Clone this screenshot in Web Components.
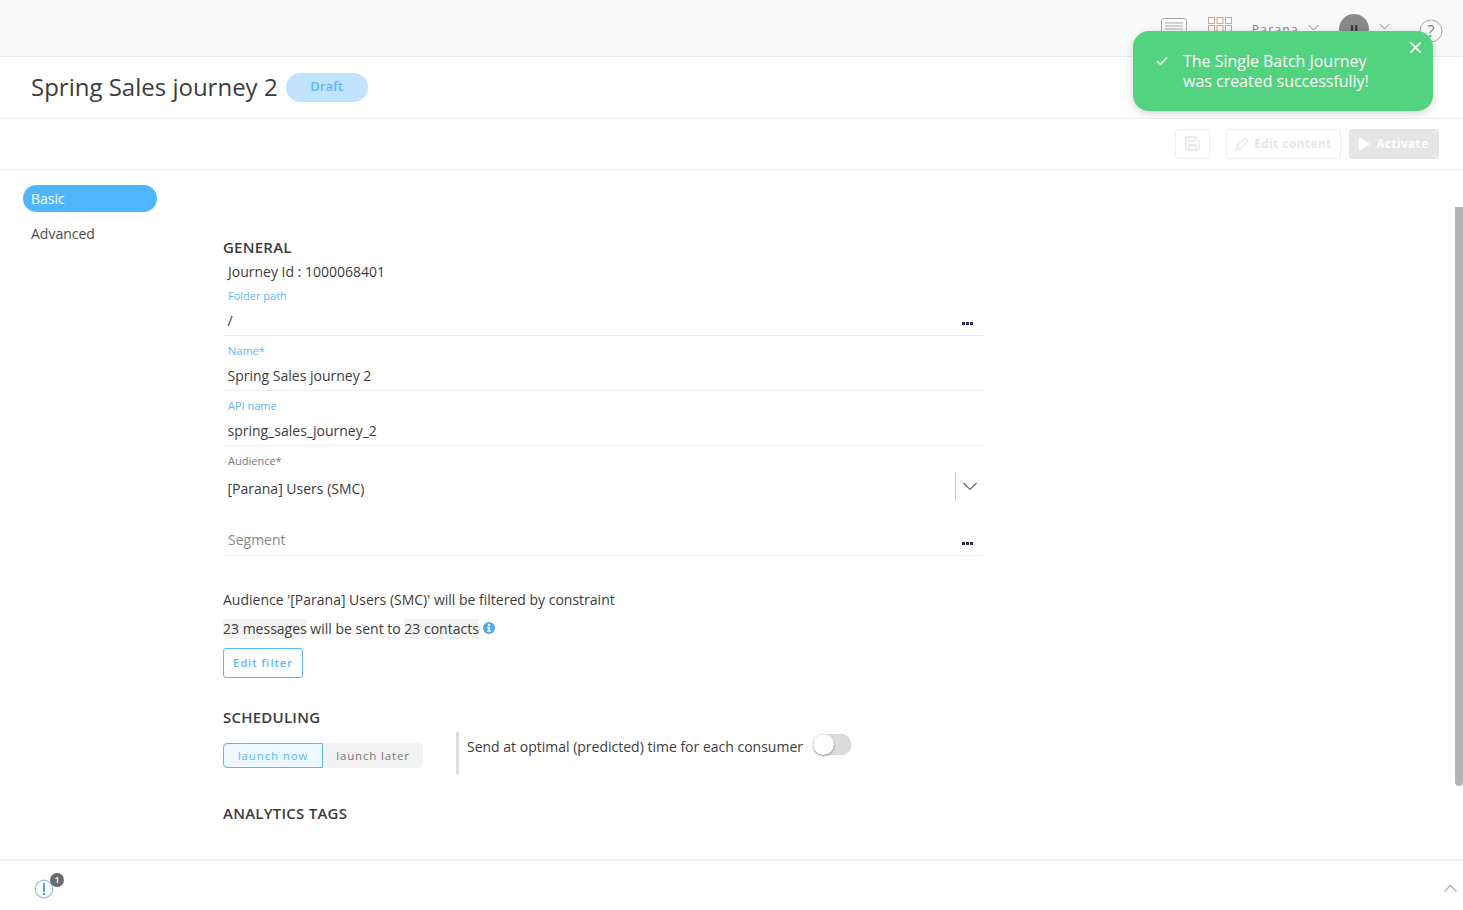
<!DOCTYPE html>
<html><head><meta charset="utf-8"><style>
html,body{margin:0;height:910px;overflow:hidden;background:#fff;font-family:"Open Sans","Liberation Sans",sans-serif;color:#3c3c3c}
</style></head><body>
<app-page></app-page>
<script>
const css=(s)=>`<style>${s}</style>`;
class Base extends HTMLElement{
  constructor(){super();this.attachShadow({mode:'open'}).innerHTML=this.markup();}
}
class TopBar extends Base{markup(){return css(`
:host{display:flex;height:56px;box-sizing:content-box;background:#fafafa;border-bottom:1px solid #eee;align-items:flex-start;justify-content:flex-end;color:#888;overflow:hidden}
.row{display:flex;align-items:center;height:42px;margin-top:8px;padding-right:20px}
svg{display:block}
.name{font-size:12px;letter-spacing:1.3px;margin:0 0 0 20px;color:#888}
.av{width:30px;height:30px;border-radius:50%;background:#8a8a8a;color:#333;font-size:13px;font-weight:700;display:flex;align-items:center;justify-content:center;margin:0 10px 0 20px}
`)+`<div class="row">
<svg style="margin-top:-3px" width="26" height="20" viewBox="0 0 26 20" fill="none" stroke="#aaa"><rect x=".5" y=".5" width="25" height="19" rx="2"/><path d="M4 5h18M4 8h18M4 11h18M4 14h18"/></svg>
<svg style="margin:-5px 0 0 21px" width="24" height="20" viewBox="0 0 24 20" fill="none" stroke="#c4a994"><rect x=".5" y=".5" width="6" height="6"/><rect x="9" y=".5" width="6" height="6"/><rect x="17.5" y=".5" width="6" height="6"/><rect x=".5" y="8.500" width="6" height="6"/><rect x="9" y="8.500" width="6" height="6"/><rect x="17.5" y="8.500" width="6" height="6"/></svg>
<span class="name">Parana</span>
<svg style="margin:-3px 0 0 9px" width="11" height="7" viewBox="0 0 11 7" fill="none" stroke="#888"><path d="M.5 1l5 5 5-5"/></svg>
<span class="av">II</span>
<svg style="margin-top:-6px" width="11" height="7" viewBox="0 0 11 7" fill="none" stroke="#888"><path d="M.5 1l5 5 5-5"/></svg>
<svg style="margin:3px 0 0 29px" width="24" height="24" viewBox="0 0 24 24" fill="none"><circle cx="12" cy="12" r="11" stroke="#aaa"/><text x="12" y="18" text-anchor="middle" font-size="17" fill="#888" font-family="Open Sans">?</text></svg>
</div>`}}
class TitleBar extends Base{markup(){return css(`
:host{display:flex;align-items:center;height:61px;border-bottom:1px solid #eee;padding-left:31px}
h1{margin:0;font-size:24px;font-weight:400;color:#3c3c3c;line-height:34px;position:relative;top:-1px}
.b{margin-left:8px;width:82px;height:29px;border-radius:15px;background:#c1e3fb;color:#5ab8fa;font-size:13px;font-weight:600;display:flex;align-items:center;justify-content:center;position:relative;padding-bottom:4px;box-sizing:border-box}
`)+`<h1>Spring Sales journey 2</h1><span class="b">Draft</span>`}}
class ActionBar extends Base{markup(){return css(`
:host{display:flex;align-items:center;justify-content:flex-end;height:50px;border-bottom:1px solid #eee;padding-right:24px;gap:8px}
.btn{box-sizing:border-box;height:30px;border:1px solid #eee;border-radius:3px;display:flex;align-items:center;justify-content:center;font-size:11.5px;font-weight:700;letter-spacing:.6px;color:#e6e6e6;white-space:nowrap;padding-bottom:1px}
.save{width:35px;margin-right:8px}.edit{width:115px;gap:5px}.act{width:90px;background:#e5e5e5;border-color:#e5e5e5;color:#fff;gap:6px;letter-spacing:.55px}
`)+`<div class="btn save"><svg width="15" height="15" viewBox="0 0 15 15" fill="none" stroke="#e6e6e6" stroke-width="1.3"><path d="M1 2.5A1.5 1.5 0 0 1 2.500 1h8L14 4.500v8a1.500 1.500 0 0 1-1.500 1.500h-10A1.500 1.500 0 0 1 1 12.500z"/><path d="M4 1v4h6V1M4 14V9h7v5"/></svg></div>
<div class="btn edit"><svg width="14" height="14" viewBox="0 0 14 14" fill="none" stroke="#e6e6e6" stroke-width="1.100"><path d="M1 13l1-4L10 1l3 3-8 8zM2 9l3 3"/></svg>Edit content</div>
<div class="btn act"><svg width="11" height="14" viewBox="0 0 11 14" fill="#fff"><path d="M0 0l11 7-11 7z"/></svg>Activate</div>`}}
class SideNav extends Base{markup(){return css(`
:host{display:block;width:134px;margin-left:23px;padding-top:15px;font-size:14px;flex:none}
.i{height:27px;line-height:27px;padding-left:8px;border-radius:14px;box-sizing:border-box}
.on{background:#4fb6fb;color:#fff}.off{margin-top:8px;color:#4a4a4a}
`)+`<div class="i on">Basic</div><div class="i off">Advanced</div>`}}
class SectionTitle extends Base{markup(){return css(`
:host{display:block;font-size:15px;font-weight:600;line-height:20px;color:#3c3c3c;letter-spacing:.24px}
`)+`<slot></slot>`}}
class FormField extends Base{markup(){const l=this.getAttribute('label')||'',v=this.getAttribute('value')||'',lc=this.hasAttribute('gray')?'#777':'#5ab8fa';return css(`
:host{display:block;height:55px;box-sizing:border-box;position:relative;border-bottom:1px solid #eee}
.l{position:absolute;left:5px;top:7px;font-size:11px;line-height:15px;color:${lc}}
.v{position:absolute;left:4.5px;top:30px;font-size:14px;line-height:20px;color:#3c3c3c}
.d{position:absolute;right:11px;top:41px;width:11px;height:3px;background:repeating-linear-gradient(90deg,#2b2b55 0 3px,transparent 3px 4px)}
`)+`<span class="l">${l}</span><span class="v">${v}</span>${this.hasAttribute('dots')?'<i class="d"></i>':''}`}}
class AudienceSelect extends Base{markup(){return css(`
:host{display:block;height:55px;position:relative}
.l{position:absolute;left:5px;top:7px;font-size:11px;line-height:15px;color:#777}
.v{position:absolute;left:4.5px;top:33px;font-size:14px;line-height:20px;color:#3c3c3c}
.s{position:absolute;left:732px;top:26px;width:1px;height:29px;background:#ccc}
svg{position:absolute;left:740px;top:36px}
`)+`<span class="l">Audience*</span><span class="v">[Parana] Users (SMC)</span><i class="s"></i><svg width="14" height="9" viewBox="0 0 14 9" fill="none" stroke="#666" stroke-width="1.200"><path d="M.5 1l6.500 6.500L13.500 1"/></svg>`}}
class SegmentField extends Base{markup(){return css(`
:host{display:block;height:55px;box-sizing:border-box;position:relative;border-bottom:1px solid #eee}
.v{position:absolute;left:5px;top:29px;font-size:14px;line-height:20px;color:#888}
.d{position:absolute;right:11px;top:41px;width:11px;height:3px;background:repeating-linear-gradient(90deg,#2b2b55 0 3px,transparent 3px 4px)}
`)+`<span class="v">Segment</span><i class="d"></i>`}}
class FilterSummary extends Base{markup(){return css(`
:host{display:block;font-size:14px;color:#3c3c3c;line-height:20px}
.a{margin-top:0}.b{margin-top:9px;display:flex;align-items:center;white-space:pre}
mark{background:#f3f3f3;color:inherit}
svg{margin:-2px 0 0 4px}
.btn{margin-top:9px;width:80px;height:30px;box-sizing:border-box;border:1px solid #5ab8fa;border-radius:3px;color:#5ab8fa;font-size:11px;font-weight:600;letter-spacing:1px;display:flex;align-items:center;justify-content:center}
`)+`<div class="a">Audience '[Parana] Users (SMC)' will be filtered by constraint</div>
<div class="b"><mark>23 messages</mark> will be sent to <mark>23 contacts</mark><svg width="12" height="12" viewBox="0 0 12 12"><circle cx="6" cy="6" r="6" fill="#4fa8f0"/><rect x="4.800" y="5" width="2.400" height="4.500" fill="#fff"/><rect x="4" y="8.700" width="4" height="1" fill="#fff"/><rect x="4" y="5" width="2" height="1" fill="#fff"/><circle cx="6" cy="3" r="1.300" fill="#fff"/></svg></div>
<div class="btn">Edit filter</div>`}}
class Scheduling extends Base{markup(){return css(`
:host{display:flex;align-items:flex-start;font-size:14px;color:#3c3c3c;margin-top:5px}
.tabs{display:flex;width:200px;height:25px;margin-top:11px;background:#f2f2f2;border-radius:4px;font-size:11.500px;letter-spacing:.85px;font-weight:400}
.t{display:flex;align-items:center;justify-content:center;box-sizing:border-box;padding-bottom:1px}
.on{width:100px;background:#eef8ff;border:1px solid #5ab8fa;border-radius:4px 0 0 4px;color:#5ab8fa}
.off{width:100px;color:#777}
.sep{width:3px;height:42px;background:#ddd;margin:0 8px 0 33px}
.txt{line-height:20px;margin-top:5px}
.tg{width:38px;height:21px;border-radius:11px;background:#dcdcdc;margin:2px 0 0 10px;position:relative;box-shadow:inset 0 0 1px #999}
.tg::after{content:"";position:absolute;left:0;top:0;width:21px;height:21px;border-radius:50%;background:#fff;box-shadow:0 1px 2px rgba(0,0,0,.45)}
`)+`<div class="tabs"><div class="t on">launch now</div><div class="t off">launch later</div></div><i class="sep"></i><span class="txt">Send at optimal (predicted) time for each consumer</span><i class="tg"></i>`}}
class JourneyForm extends Base{markup(){return css(`
:host{display:block;width:761px;margin-left:66px;padding-top:67px;font-size:14px;flex:none}
.id{margin:5px 0 0 5px;line-height:20px;height:19px}
.sum{margin-top:34px}
.sch{margin-top:29px}
.an{margin-top:29px}
`)+`<section-title>GENERAL</section-title><div class="id">Journey Id : 1000068401</div>
<form-field label="Folder path" value="/" dots></form-field>
<form-field label="Name*" value="Spring Sales journey 2"></form-field>
<form-field label="API name" value="spring_sales_journey_2"></form-field>
<audience-select></audience-select>
<segment-field></segment-field>
<filter-summary class="sum"></filter-summary>
<section-title class="sch">SCHEDULING</section-title>
<schedule-row></schedule-row>
<section-title class="an">ANALYTICS TAGS</section-title>`}}
class FootBar extends Base{markup(){return css(`
:host{display:flex;align-items:center;justify-content:space-between;height:49px;border-top:2px solid #eee;position:relative;box-sizing:content-box}
svg{display:block}
.al{margin:6px 0 0 34px;position:relative}
.n{position:absolute;left:16px;top:-6px;width:14px;height:14px;border-radius:50%;background:#6b6b6b;color:#fff;font-size:9px;font-weight:600;line-height:14px;text-align:center}
.up{margin:5px 6px 0 0}
`)+`<div class="al"><svg width="20" height="20" viewBox="0 0 20 20"><circle cx="10" cy="10" r="8.800" fill="none" stroke="#8ec5fb" stroke-width="1.200"/><rect x="9" y="4" width="2" height="9" fill="#4fa8f0"/><circle cx="10" cy="15" r="1.300" fill="#4fa8f0"/></svg><span class="n">1</span></div>
<svg class="up" width="13" height="8" viewBox="0 0 13 8" fill="none" stroke="#b9a6c6" stroke-width="1.400"><path d="M.5 7.500l6-6 6 6"/></svg>`}}
class ToastMsg extends Base{markup(){return css(`
:host{position:absolute;left:1133px;top:31px;width:300px;height:80px;box-sizing:border-box;background:#53d280;border-radius:16px;box-shadow:0 2px 8px rgba(0,0,0,.18);color:#fff;display:flex;align-items:center;padding-left:23px}
.m{font-size:16px;line-height:20px;margin:-1px 0 0 15px;letter-spacing:-.02px}
svg.c{margin-top:-20px}
svg.x{position:absolute;right:12px;top:11px}
`)+`<svg class="c" width="12" height="10" viewBox="0 0 12 10" fill="none" stroke="#fff" stroke-width="1.500"><path d="M1 5l3.500 3.500L11 1.500"/></svg><div class="m">The Single Batch Journey<br>was created successfully!</div><svg class="x" width="11" height="11" viewBox="0 0 11 11" stroke="#fff" stroke-width="1.700"><path d="M.5.5l10 10M10.500.5l-10 10"/></svg>`}}
class AppPage extends Base{markup(){return css(`
:host{display:flex;flex-direction:column;height:910px;position:relative;overflow:hidden}
.main{display:flex;flex:1;min-height:0}
.sb{position:absolute;right:0;top:207px;width:8px;height:579px;background:#b3b3b3;border-radius:0 0 4px 4px}
`)+`<top-bar></top-bar><title-bar></title-bar><action-bar></action-bar>
<div class="main"><side-nav></side-nav><journey-form></journey-form></div>
<foot-bar></foot-bar><i class="sb"></i><toast-msg></toast-msg>`}}
const defs={'top-bar':TopBar,'title-bar':TitleBar,'action-bar':ActionBar,'side-nav':SideNav,'section-title':SectionTitle,'form-field':FormField,'audience-select':AudienceSelect,'segment-field':SegmentField,'filter-summary':FilterSummary,'schedule-row':Scheduling,'journey-form':JourneyForm,'foot-bar':FootBar,'toast-msg':ToastMsg,'app-page':AppPage};
for(const k in defs)customElements.define(k,defs[k]);
</script>
</body></html>
